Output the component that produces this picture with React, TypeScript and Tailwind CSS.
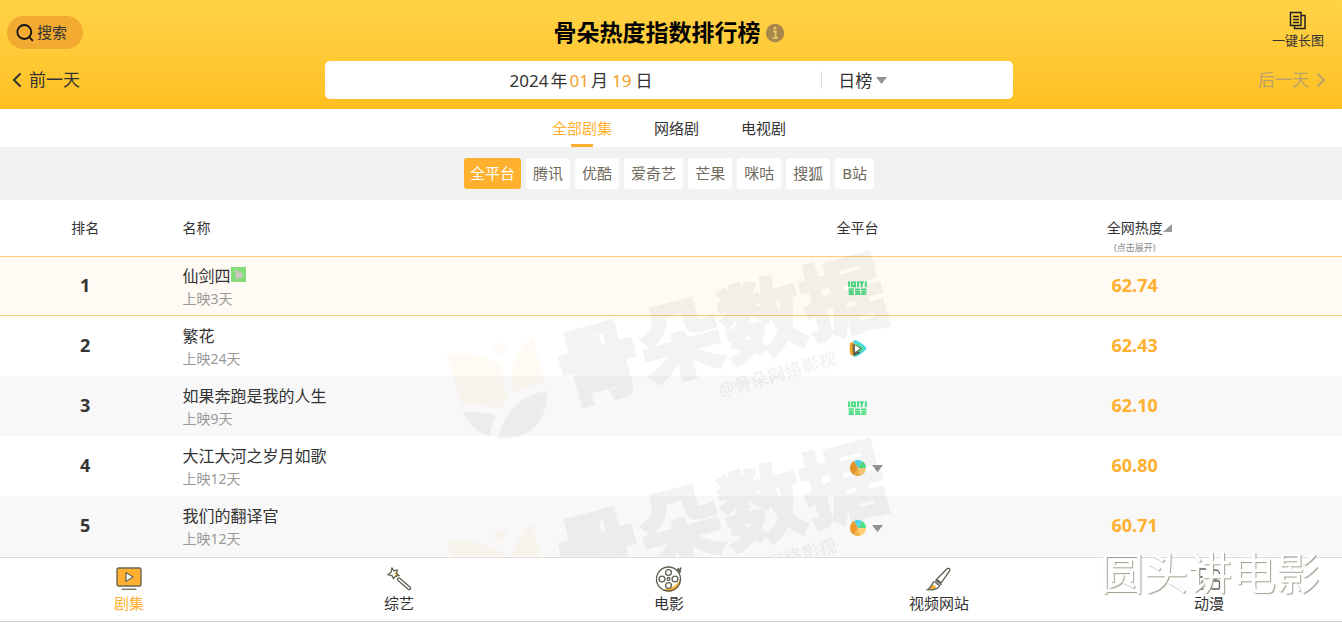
import type { ReactNode } from "react";

type Platform = "iqiyi" | "tencent" | "multi";

type Show = {
  rank: number;
  name: string;
  days: number;
  platform: Platform;
  heat: string;
  exclusive?: boolean;
};

const shows: Show[] = [
  { rank: 1, name: "仙剑四", days: 3, platform: "iqiyi", heat: "62.74", exclusive: true },
  { rank: 2, name: "繁花", days: 24, platform: "tencent", heat: "62.43" },
  { rank: 3, name: "如果奔跑是我的人生", days: 9, platform: "iqiyi", heat: "62.10" },
  { rank: 4, name: "大江大河之岁月如歌", days: 12, platform: "multi", heat: "60.80" },
  { rank: 5, name: "我们的翻译官", days: 12, platform: "multi", heat: "60.71" },
];

const tabs = ["全部剧集", "网络剧", "电视剧"];
const filters = ["全平台", "腾讯", "优酷", "爱奇艺", "芒果", "咪咕", "搜狐", "B站"];

function Chevron({ right = false }: { right?: boolean }) {
  return (
    <svg width="10" height="16" viewBox="0 0 10 16" fill="none" stroke="currentColor" strokeWidth="2" aria-hidden="true">
      <path d={right ? "M1.5 1.5 8 8l-6.5 6.5" : "M8.5 1.5 2 8l6.5 6.5"} />
    </svg>
  );
}

function CaretDown() {
  return (
    <svg width="11" height="7" viewBox="0 0 11 7" aria-hidden="true">
      <path d="M0 0h11L5.5 7z" fill="#8f938f" />
    </svg>
  );
}

function IqiyiLogo() {
  return (
    <svg width="19" height="14" viewBox="0 0 19 14" fill="none" stroke="#4fdc85" strokeWidth="2" role="img" aria-label="爱奇艺">
      <path d="M1 .5v5.700M3.800 1.400h3.200v3.800H3.800zM6 4.500 7.800 6M10 .3v5.900M12 .3l1.600 2.800L15.200.3M13.600 3v3.200M17.800.3v5.900" />
      <path d="M.5 8h5.500M.5 10h5.500M1 11.700h4.500M.5 13.300h5.500M3 8v5.500M7 8.200h5M7 10.200h5M8 12h2v1.200H8zM11.400 10v3.800M13 8.400h5.500M14.600 7.200v2.400M16.900 7.200v2.400M13.500 10.700h4l-3.600 2.400h4.600" strokeWidth="1.500" />
    </svg>
  );
}

function TencentLogo() {
  return (
    <svg width="18" height="17" viewBox="0 0 18 17" role="img" aria-label="腾讯视频">
      <path d="M4 .8C5.500-.2 8 .2 11 2.200l5 3.900c1.900 1.600 1.900 3 0 4.500L10 15.400c-2.500 1.500-4.500 1.700-5.500.8z" fill="#4fd8e4" />
      <path d="M8 3.500 15 8.300 9 14l-4 2.200c-1 .3-1.200-.6-1-2z" fill="#4fdc85" />
      <path d="M1 3.500c.3-1.500 1.500-1.700 3-.8L7.500 5v9.500L4 15.500c-1.700 0-2.500-.8-2.800-2.300-.6-3.200-.6-6.500-.2-9.700z" fill="#f0a028" />
      <path d="M3.500 3.500 13 8.500 4 14.500z" fill="#6a6a52" />
      <path d="M6 5.300 11.200 8.500 6 12z" fill="#fff" />
      <path d="M4.500 15 10.500 12" stroke="#444" strokeWidth="1.800" />
    </svg>
  );
}

function MultiLogo() {
  return (
    <svg width="16" height="16" viewBox="0 0 16 16" role="img" aria-label="多平台">
      <path d="M8 8 4 1.070A8 8 0 0 1 12 1.070z" fill="#55d8ea" />
      <path d="M8 8 12 1.070A8 8 0 0 1 16 8z" fill="#4fdf8b" />
      <path d="M8 8h8a8 8 0 0 1-5.500 7.600z" fill="#ffcf7a" />
      <path d="M8 8l2.500 7.600A8 8 0 0 1 4 14.900z" fill="#f8b548" />
      <path d="M8 8 4 14.930A8 8 0 0 1 4 1.070z" fill="#ec9c2d" />
    </svg>
  );
}

function PlatformCell({ platform }: { platform: Platform }) {
  if (platform === "iqiyi") return <IqiyiLogo />;
  if (platform === "tencent") return <TencentLogo />;
  return (
    <button type="button" aria-label="展开平台" className="relative block">
      <MultiLogo />
      <span className="absolute top-0 left-full flex h-full items-center pl-1.5">
        <CaretDown />
      </span>
    </button>
  );
}

function Watermark() {
  return (
    <svg className="block h-[187px] w-[480px] shrink-0 overflow-visible" viewBox="0 0 1440 561" aria-hidden="true">
      <g fill="#ffa532" fillOpacity="0.055">
        <path d="M50 315Q140 298 217 348 219 400 232 440 225 465 205 478 160 460 93 462z" />
        <path d="M308 257Q322 330 346 395 290 408 252 432 220 340 308 257z" />
        <path d="M183 300 208 278 238 284Q222 298 217 320 200 304 183 300z" />
      </g>
      <g fill="#000" opacity="0.05">
        <path d="M98 486Q150 482 198 496 182 530 180 560 120 540 98 486z" />
        <path d="M352 422Q235 440 203 566 350 570 352 422z" />
        <text transform="translate(409 462) rotate(-15)" fontSize="253" fontWeight="900" stroke="#000" strokeWidth="6">骨朵数据</text>
        <text transform="translate(872 442) rotate(-16)" fontSize="53" fontWeight="700">@骨朵网络影视</text>
      </g>
    </svg>
  );
}

const stroke = { fill: "none", stroke: "#5f6052", strokeWidth: 1.3 };

const TvIcon = (
  <svg width="26" height="24" viewBox="0 0 26 24" aria-hidden="true">
    <rect x="1" y="1" width="24" height="18" rx="1.500" fill="#ffb02e" stroke="#6b6550" strokeWidth="1.400" />
    <path d="M10 5.500v9l7-4.500z" fill="#fff" stroke="#6b6550" strokeWidth="1.200" />
    <path d="M5.500 22.300h15" stroke="#7a7a6a" strokeWidth="1.500" />
  </svg>
);

const WandIcon = (
  <svg width="26" height="24" viewBox="0 0 26 24" {...stroke} aria-hidden="true">
    <path d="M9 4.500 12.500 8 9.500 10.500z" fill="#ffb02e" stroke="none" />
    <path d="m6 1.200 1.800 2.600 3.400-.8-.6 3.400 2.400 2.200-3.300.6-2.300 2.300-1.500-3-3.800-.8 2.900-2.500z" />
    <path d="M11.800 13.200c-1-1.300.8-3 2.100-1.900l10.200 9c1.300 1.300-.4 3.200-1.900 2z" />
  </svg>
);

const ReelIcon = (
  <svg width="28" height="26" viewBox="0 0 28 26" {...stroke} aria-hidden="true">
    <path d="M25.500 12a12 12 0 0 1-18.500 11.500c9 0 15.500-4 18.500-11.500z" fill="#ffb02e" stroke="none" />
    <circle cx="13.500" cy="13" r="12" />
    <circle cx="13.500" cy="6.500" r="2.900" />
    <circle cx="13.500" cy="19.500" r="2.900" />
    <circle cx="7" cy="13" r="2.900" />
    <circle cx="20" cy="13" r="2.900" />
    <circle cx="13.500" cy="13" r="1.500" />
    <path d="m22 4 4 2m-3-4 1.500 3.500L26 1.500" strokeWidth="1.600" />
  </svg>
);

const BrushIcon = (
  <svg width="26" height="24" viewBox="0 0 26 24" {...stroke} aria-hidden="true">
    <path d="M3 22.500c2.500-1.500 2-4 4-4.500 1.800-.2 3.500 2 2.500 3.500-1.200 1.300-4 1.600-6.500 1z" fill="#ffb02e" stroke="none" />
    <path d="m10.500 12.500 10-10.300c1.500-1.600 4-1 3.200 1.500l-8.500 12.200zM9.500 13l6 5M8.500 14.500l5.500 4.800M8 14.500c-2 2-2 5.500-6.500 8.200 5 .4 9.500.3 12-3.500" />
  </svg>
);

const BlocksIcon = (
  <svg width="26" height="24" viewBox="0 0 26 24" {...stroke} aria-hidden="true">
    <path d="M10 2H3.500v8H10" />
    <path d="M15.500 7a4 4 0 1 1 8 0M17 10.500h5l-2.500 2z" />
    <path d="M17 10.500h5l-2.500 2z" fill="#ffb02e" />
    <path d="M7 13.500 2.500 22h5" />
    <rect x="15.500" y="14" width="8" height="8" rx="1" />
  </svg>
);

const navItems: { label: string; icon: ReactNode }[] = [
  { label: "剧集", icon: TvIcon },
  { label: "综艺", icon: WandIcon },
  { label: "电影", icon: ReelIcon },
  { label: "视频网站", icon: BrushIcon },
  { label: "动漫", icon: BlocksIcon },
];

export default function App() {
  return (
    <div className="relative flex min-h-screen flex-col bg-white font-['Noto_Sans','Noto_Sans_CJK_SC',sans-serif] text-[#333]">
      <header className="bg-linear-to-b from-[#ffd347] to-[#ffc020] pb-2.5">
        <div className="grid h-[61px] grid-cols-[1fr_auto_1fr] items-center pt-1">
          <button type="button" className="ml-[7px] flex h-[33px] w-[76px] items-center gap-[3px] rounded-full bg-[#f2aa30] pl-[9px] text-[15px]">
            <svg width="18" height="18" viewBox="0 0 18 18" fill="none" stroke="#111" strokeWidth="1.800" aria-hidden="true">
              <circle cx="8.300" cy="8" r="7" />
              <path d="m13.300 13 3.500 3.800" />
            </svg>
            搜索
          </button>
          <h1 className="flex items-center gap-1 pr-1 text-[23px] font-bold text-black">
            骨朵热度指数排行榜
            <svg width="20" height="20" viewBox="0 0 20 20" role="img" aria-label="说明">
              <circle cx="10" cy="10" r="9.200" fill="#a8884a" />
              <path d="M8 8.500h2.700v6M7.500 14.800h5.500" fill="none" stroke="#e8c768" strokeWidth="1.800" />
              <circle cx="10" cy="5.200" r="1.400" fill="#e8c768" />
            </svg>
          </h1>
          <button type="button" className="mr-[18px] flex flex-col items-center justify-self-end pb-1 text-[13px] leading-5">
            <svg width="18" height="19" viewBox="0 0 18 19" fill="none" stroke="#222" strokeWidth="1.500" aria-hidden="true">
              <path d="M1.500 1.500h10.500v13h-10.500zM5.500 14.500V17.500h10.500V4.500h-4M4 5.500h6M4 8.500h6M4 11.500h6" />
            </svg>
            一键长图
          </button>
        </div>
        <div className="grid h-[38px] grid-cols-[1fr_auto_1fr] items-center text-[17px]">
          <button type="button" className="ml-3 flex items-center gap-[7px] justify-self-start">
            <Chevron />
            前一天
          </button>
          <div className="mr-1 flex h-[38px] w-[51.3vw] items-center rounded-[5px] bg-white">
            <button type="button" className="flex flex-1 items-center justify-center gap-0.5 pt-0.5 pl-4">
              <span>2024</span>
              <span>年</span>
              <span className="text-[#f0a02a]">01</span>
              <span>月</span>
              <span className="px-0.5 text-[#f0a02a]">19</span>
              <span>日</span>
            </button>
            <div className="flex h-[18px] w-48 items-center border-l border-[#ddd] pl-4">
              <label htmlFor="period" className="sr-only">榜单周期</label>
              <select id="period" defaultValue="日榜" className="h-8 w-[38px] appearance-none bg-transparent pt-0.5">
                <option>日榜</option>
              </select>
              <CaretDown />
            </div>
          </div>
          <button type="button" disabled className="mr-4 flex items-center gap-[7px] justify-self-end text-[#b8a468]">
            后一天
            <Chevron right />
          </button>
        </div>
      </header>

      <nav aria-label="剧集类型" className="flex h-[38px] justify-center pr-1 text-[15px]">
        {tabs.map((tab, i) => (
          <a
            key={tab}
            href={"#tab-" + i}
            className={i === 0 ? "flex flex-col items-center px-[21px] pt-[3px] text-[#ffb02e]" : "flex flex-col items-center px-[21px] pt-[3px]"}
          >
            <span className="leading-8">{tab}</span>
            {i === 0 && <span className="h-[3px] w-[22px] bg-[#ffb02e]" />}
          </a>
        ))}
      </nav>

      <div className="flex h-[53px] items-center justify-center gap-[5px] bg-[#f2f2f2] pr-1 text-[15px]">
        {filters.map((name, i) => (
          <button
            key={name}
            type="button"
            className={
              i === 0
                ? "h-[31px] rounded-[3px] bg-[#ffb02e] px-1.5 text-white"
                : "h-[31px] rounded-[3px] bg-white px-[7px] text-[#6f6a5c]"
            }
          >
            {name}
          </button>
        ))}
      </div>

      <main className="relative flex-1 overflow-hidden">
        <table className="w-full table-fixed border-separate border-spacing-0">
          <colgroup>
            <col className="w-[12.7%]" />
            <col className="w-[46%]" />
            <col className="w-[10.4%]" />
            <col className="w-[30.9%]" />
          </colgroup>
          <thead className="text-sm">
            <tr className="h-14">
              <th className="p-0 font-normal">排名</th>
              <th className="p-0 pl-3 text-left font-normal">名称</th>
              <th className="p-0 font-normal">全平台</th>
              <th className="p-0 pt-4 font-normal">
                <button type="button" className="flex w-full flex-col items-center">
                  <span className="relative leading-6">
                    全网热度
                    <svg className="absolute top-2 left-full" width="9" height="8" viewBox="0 0 9 8" aria-hidden="true">
                      <path d="M9 0v8H0z" fill="#999" />
                    </svg>
                  </span>
                  <span className="text-[9px] leading-4 text-[#888]">(点击展开)</span>
                </button>
              </th>
            </tr>
          </thead>
          <tbody>
            {shows.map((show, i) => (
              <tr
                key={show.rank}
                className={
                  i === 0
                    ? "h-[60px] bg-[#fffaf3] [&>td]:border-y [&>td]:border-[#ffcb78]"
                    : i % 2 === 0
                      ? "h-[60px] bg-[#f8f8f8]"
                      : "h-[60px]"
                }
              >
                <td className="p-0 pb-0.5 text-center text-lg font-bold">{show.rank}</td>
                <td className="p-0 pt-0.5 pl-3">
                  <div className="flex h-6 items-center text-base">
                    {show.name}
                    {show.exclusive && (
                      <svg className="mb-1 ml-px" width="15" height="15" viewBox="0 0 15 15" role="img" aria-label="独播">
                        <path d="M0 0h15v15H0z" fill="#86dc78" />
                        <path d="M4 2.500 11.500 6v4L5 12.500z" fill="#c8c8bd" />
                      </svg>
                    )}
                  </div>
                  <div className="text-sm leading-[22px] text-[#999]">上映{show.days}天</div>
                </td>
                <td className="p-0 pt-1">
                  <div className="flex justify-center">
                    <PlatformCell platform={show.platform} />
                  </div>
                </td>
                <td className="p-0 pb-0.5 text-center text-lg font-bold text-[#ffb02e]">{show.heat}</td>
              </tr>
            ))}
          </tbody>
        </table>
        <div className="pointer-events-none absolute inset-x-0 top-[50px] flex flex-col items-center pr-0.5">
          <Watermark />
          <Watermark />
        </div>
      </main>

      <nav aria-label="榜单分类" className="sticky bottom-0 overflow-hidden border-t border-[#ddd] bg-white pb-px">
        <ul className="-mr-0.5 -ml-1.5 grid grid-cols-5 border-b border-[#ccccc6]">
          {navItems.map((item, i) => (
            <li key={item.label}>
              <a
                href={"#nav-" + i}
                className={
                  i === 0
                    ? "flex h-[63px] flex-col items-center pt-2 text-[15px] text-[#ffb02e]"
                    : "flex h-[63px] flex-col items-center pt-2 text-[15px]"
                }
              >
                <span className="flex h-[25px] items-center">{item.icon}</span>
                <span className="leading-6">{item.label}</span>
              </a>
            </li>
          ))}
        </ul>
      </nav>

      <div className="pointer-events-none fixed right-[22px] bottom-[18px] text-[44px] leading-[64px] text-white [text-shadow:1px_1px_1px_#9aa08c]">
        圆头讲电影
      </div>
    </div>
  );
}
